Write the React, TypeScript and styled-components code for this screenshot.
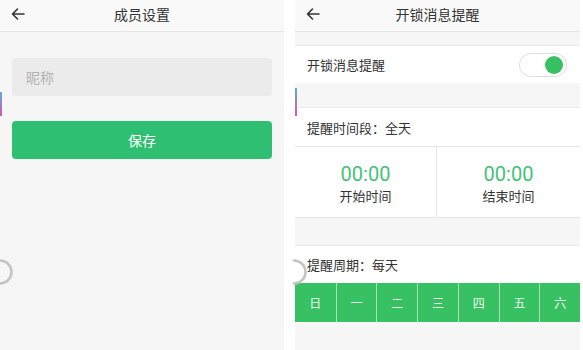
import React from 'react';
import styled, { createGlobalStyle } from 'styled-components';

const COLORS = {
  page: '#f6f6f6',
  header: '#f9f9f9',
  line: '#e6e6e6',
  text: '#333333',
  muted: '#b3b3b3',
  green: '#2fbf72',
  dayGreen: '#37c162',
  time: '#45c179',
};

const GlobalStyle = createGlobalStyle`
  html, body {
    margin: 0;
    padding: 0;
    background: #ffffff;
  }
  body {
    font-family: 'Noto Sans CJK SC', 'Noto Sans', sans-serif;
    color: ${COLORS.text};
  }
`;

const Screen = styled.div`
  display: flex;
  width: 583px;
  height: 350px;
  overflow: hidden;
  background: #ffffff;
`;

const Phone = styled.div<{ $width: number }>`
  position: relative;
  display: flex;
  flex-direction: column;
  width: ${(p) => p.$width}px;
  height: 350px;
  flex-shrink: 0;
  background: ${COLORS.page};
`;

const Gutter = styled.div<{ $width: number }>`
  width: ${(p) => p.$width}px;
  flex-shrink: 0;
  background: #ffffff;
`;

const Header = styled.div`
  position: relative;
  display: flex;
  align-items: center;
  justify-content: center;
  height: 32px;
  padding-bottom: 4px;
  background: ${COLORS.header};
  border-bottom: 1px solid ${COLORS.line};
  box-sizing: border-box;
  flex-shrink: 0;
`;

const BackButton = styled.span`
  position: absolute;
  left: 10px;
  top: 6px;
  display: flex;
`;

const Title = styled.h1`
  margin: 0;
  font-size: 14px;
  font-weight: 400;
  color: ${COLORS.text};
`;

const Form = styled.div`
  display: flex;
  flex-direction: column;
  gap: 25px;
  padding: 26px 12px 0;
`;

const Input = styled.div`
  display: flex;
  align-items: center;
  height: 38px;
  padding: 0 14px;
  border-radius: 4px;
  background: #ebebeb;
  color: ${COLORS.muted};
  font-size: 14px;
`;

const SaveButton = styled.button`
  height: 38px;
  border: none;
  border-radius: 4px;
  background: ${COLORS.green};
  color: #ffffff;
  font-family: inherit;
  font-size: 14px;
`;

const Spacer = styled.div<{ $h: number }>`
  height: ${(p) => p.$h}px;
  flex-shrink: 0;
`;

const Row = styled.div<{ $h: number; $border?: boolean }>`
  display: flex;
  align-items: center;
  justify-content: space-between;
  height: ${(p) => p.$h}px;
  padding: 0 12px;
  background: #ffffff;
  font-size: 13px;
  color: ${COLORS.text};
  box-sizing: border-box;
  border-top: 1px solid #ececec;
  border-bottom: ${(p) => (p.$border ? `1px solid ${COLORS.line}` : 'none')};
  flex-shrink: 0;
`;

const Toggle = styled.div`
  display: flex;
  align-items: center;
  justify-content: flex-end;
  width: 48px;
  height: 24px;
  padding: 0 3px;
  border: 1px solid #dedede;
  border-radius: 13px;
  background: #ffffff;
  box-sizing: border-box;
  margin-right: 1px;
`;

const Knob = styled.span`
  width: 18px;
  height: 18px;
  border-radius: 50%;
  background: ${COLORS.dayGreen};
`;

const TimeGrid = styled.div`
  display: grid;
  grid-template-columns: 142px 1fr;
  height: 71px;
  background: #ffffff;
  border-bottom: 1px solid ${COLORS.line};
  box-sizing: border-box;
  flex-shrink: 0;
`;

const TimeCell = styled.div<{ $divider?: boolean }>`
  display: flex;
  flex-direction: column;
  align-items: center;
  justify-content: center;
  gap: 1px;
  padding-top: 2px;
  border-right: ${(p) => (p.$divider ? `1px solid ${COLORS.line}` : 'none')};
`;

const TimeValue = styled.span`
  font-family: Roboto, 'Noto Sans', sans-serif;
  font-size: 20px;
  line-height: 24px;
  color: ${COLORS.time};
`;

const TimeLabel = styled.span`
  font-size: 13px;
  line-height: 18px;
  color: ${COLORS.text};
`;

const DayBar = styled.div`
  display: grid;
  grid-template-columns: repeat(7, 1fr);
  height: 39px;
  background: ${COLORS.dayGreen};
  flex-shrink: 0;
`;

const Day = styled.span<{ $first?: boolean }>`
  display: flex;
  align-items: center;
  justify-content: center;
  color: #e9fbef;
  font-size: 12px;
  border-left: ${(p) => (p.$first ? 'none' : '1px solid rgba(255,255,255,0.55)')};
`;

const Spinner = styled.svg<{ $left: number }>`
  position: absolute;
  left: ${(p) => p.$left}px;
  top: 257px;
`;

const EdgeMark = styled.span<{ $top: number; $h: number }>`
  position: absolute;
  left: 0;
  top: ${(p) => p.$top}px;
  width: 2px;
  height: ${(p) => p.$h}px;
  background: linear-gradient(#5ea8e6, #d55aa6);
`;

const BackArrow = () => (
  <svg width="16" height="16" viewBox="0 0 16 16" fill="none">
    <path d="M14 8H2.5M7.5 3L2.5 8l5 5" stroke="#333" strokeWidth="1.6" strokeLinecap="round" strokeLinejoin="round" />
  </svg>
);

const LoadingArc = ({ left }: { left: number }) => (
  <Spinner $left={left} width="18" height="30" viewBox="0 0 18 30">
    <path d="M2 3.5A11 11 0 0 1 2 26.5" stroke="#c4c4c4" strokeWidth="2.6" fill="none" strokeLinecap="round" />
  </Spinner>
);

const DAYS = ['日', '一', '二', '三', '四', '五', '六'];

export default function App() {
  return (
    <>
      <GlobalStyle />
      <Screen>
        <Phone $width={284}>
          <Header>
            <BackButton>
              <BackArrow />
            </BackButton>
            <Title>成员设置</Title>
          </Header>
          <Form>
            <Input>昵称</Input>
            <SaveButton>保存</SaveButton>
          </Form>
          <EdgeMark $top={92} $h={24} />
          <LoadingArc left={-2} />
        </Phone>
        <Gutter $width={11} />
        <Phone $width={285}>
          <Header>
            <BackButton>
              <BackArrow />
            </BackButton>
            <Title>开锁消息提醒</Title>
          </Header>
          <Spacer $h={13} />
          <Row $h={38}>
            开锁消息提醒
            <Toggle>
              <Knob />
            </Toggle>
          </Row>
          <Spacer $h={24} />
          <Row $h={40} $border>
            提醒时间段：全天
          </Row>
          <TimeGrid>
            <TimeCell $divider>
              <TimeValue>00:00</TimeValue>
              <TimeLabel>开始时间</TimeLabel>
            </TimeCell>
            <TimeCell>
              <TimeValue>00:00</TimeValue>
              <TimeLabel>结束时间</TimeLabel>
            </TimeCell>
          </TimeGrid>
          <Spacer $h={27} />
          <Row $h={38}>提醒周期：每天</Row>
          <DayBar>
            {DAYS.map((d, i) => (
              <Day key={d} $first={i === 0}>
                {d}
              </Day>
            ))}
          </DayBar>
          <EdgeMark $top={88} $h={28} />
          <LoadingArc left={-3} />
        </Phone>
        <Gutter $width={3} />
      </Screen>
    </>
  );
}
